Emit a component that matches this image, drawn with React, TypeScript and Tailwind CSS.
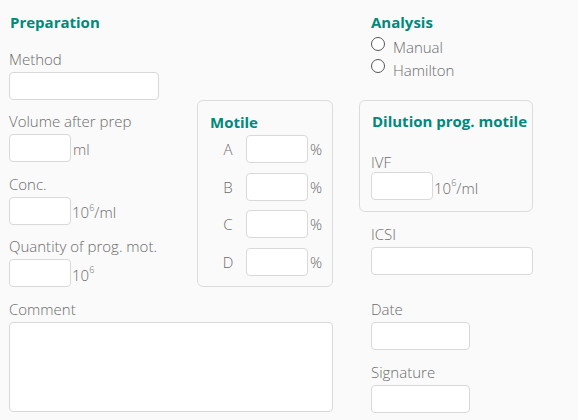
import React from "react";

const label = "block text-[15px] leading-5 text-[#6b6b6b] font-light";
const input = "block h-[28px] rounded-[4px] border border-[#d9d9d9] bg-white";
const heading = "text-[15px] leading-5 font-bold text-[#00897b] whitespace-nowrap";

function Pow({ unit = "" }: { unit?: string }) {
  return (
    <span className="text-[15px] leading-5 text-[#6b6b6b] font-light ml-[1px] mt-[3px]">
      10<sup className="text-[9px] -top-[0.8em]">6</sup>
      {unit}
    </span>
  );
}

function Field({ name, width, suffix, className = "" }: { name: string; width: string; suffix?: React.ReactNode; className?: string }) {
  return (
    <div className={className}>
      <span className={`${label} mb-[3px]`}>{name}</span>
      <div className="flex items-center">
        <input className={`${input} ${width}`} />
        {suffix}
      </div>
    </div>
  );
}

function Radio({ name }: { name: string }) {
  return (
    <label className="flex h-[22.5px] items-start gap-[8px]">
      <span className="mt-[0.5px] h-[14px] w-[14px] rounded-full border-[1.5px] border-[#555] bg-white" />
      <span className="text-[15px] leading-[22px] text-[#6b6b6b] font-light">{name}</span>
    </label>
  );
}

export default function App() {
  return (
    <div className="w-[578px] h-[420px] overflow-hidden bg-[#fafafa] pl-[9px] pt-[11px] font-['Open_Sans',sans-serif]">
      <div className="grid grid-cols-[188px_162px_174px]">
        {/* top row */}
        <div className="h-[89px]">
          <div className={`${heading} pl-[1px] mt-[1px]`}>Preparation</div>
          <Field name="Method" width="w-[150px]" className="mt-[17px]" />
        </div>
        <div />
        <div className="pl-[12px]">
          <div className={`${heading} mt-[1px]`}>Analysis</div>
          <div className="mt-[4px]">
            <Radio name="Manual" />
            <Radio name="Hamilton" />
          </div>
        </div>

        {/* middle row */}
        <div className="pt-[11px]">
          <Field name="Volume after prep" width="w-[62px]" suffix={<span className="text-[15px] leading-5 text-[#6b6b6b] font-light ml-[2px] mt-[2px]">ml</span>} />
          <Field name="Conc." width="w-[62px]" className="mt-[11.5px]" suffix={<Pow unit="/ml" />} />
          <Field name="Quantity of prog. mot." width="w-[62px]" className="mt-[11.5px]" suffix={<Pow />} />
        </div>
        <div>
          <div className="w-[136px] h-[187px] rounded-[6px] border border-[#dcdcdc] pl-[12px] pt-[11px]">
            <div className={heading}>Motile</div>
            <div className="mt-[3px] flex flex-col gap-[9.5px]">
              {["A", "B", "C", "D"].map((l) => (
                <div key={l} className="flex items-center">
                  <span className="w-[36px] text-center text-[15px] leading-5 text-[#6b6b6b] font-light">{l}</span>
                  <input className={`${input} w-[62px]`} />
                  <span className="ml-[2px] text-[15px] leading-5 text-[#6b6b6b] font-light">%</span>
                </div>
              ))}
            </div>
          </div>
        </div>
        <div>
          <div className="w-[174px] h-[112px] rounded-[6px] border border-[#dcdcdc] pl-[11px] pt-[10px]">
            <div className={`${heading} pl-[1px]`}>Dilution prog. motile</div>
            <Field name="IVF" width="w-[62px]" className="mt-[21px] [&>span]:mb-0" suffix={<Pow unit="/ml" />} />
          </div>
          <Field name="ICSI" width="w-[162px]" className="mt-[12px] pl-[12px]" />
        </div>

        {/* bottom row */}
        <div className="col-span-2 pt-[11.5px]">
          <span className={`${label} mb-[3px]`}>Comment</span>
          <textarea className="block h-[90px] w-[324px] resize-none rounded-[4px] border border-[#d9d9d9] bg-white" />
        </div>
        <div className="pt-[11.5px] pl-[12px]">
          <Field name="Date" width="w-[99px]" />
          <Field name="Signature" width="w-[99px]" className="mt-[12px]" />
        </div>
      </div>
    </div>
  );
}
